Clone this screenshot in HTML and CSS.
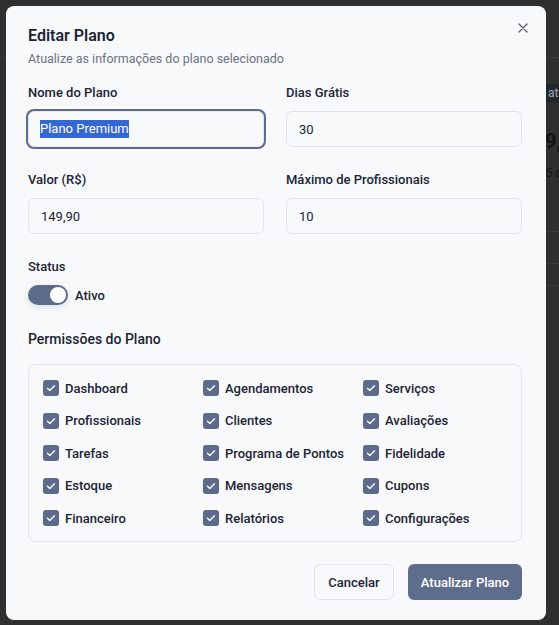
FILE: index.html
```html
<!DOCTYPE html>
<html lang="pt-BR">
<head>
<meta charset="utf-8">
<title>Editar Plano</title>
<link rel="stylesheet" href="styles.css">
</head>
<body>
<div class="page">
  <header class="page-header"></header>
  <section class="plan-card">
    <span class="badge">ativo</span>
    <div class="price">9,90</div>
    <div class="trial">5 dias</div>
    <div class="card-rule r1"></div>
    <div class="card-rule r2"></div>
    <div class="card-rule r3"></div>
  </section>
</div>

<div class="modal" role="dialog" aria-labelledby="dlg-title">
  <button class="close" aria-label="Fechar">
    <svg width="16" height="16" viewBox="0 0 16 16" fill="none" stroke="currentColor" stroke-width="1.3" stroke-linecap="round"><path d="M4 4l8 8M12 4l-8 8"/></svg>
  </button>
  <h2 id="dlg-title" class="title">Editar Plano</h2>
  <p class="subtitle">Atualize as informações do plano selecionado</p>

  <div class="grid">
    <div class="field">
      <label class="label">Nome do Plano</label>
      <div class="input focused"><span class="sel">Plano Premium</span></div>
    </div>
    <div class="field">
      <label class="label">Dias Grátis</label>
      <div class="input">30</div>
    </div>
    <div class="field">
      <label class="label">Valor (R$)</label>
      <div class="input">149,90</div>
    </div>
    <div class="field">
      <label class="label">Máximo de Profissionais</label>
      <div class="input">10</div>
    </div>
  </div>

  <div class="status">
    <label class="label">Status</label>
    <div class="switch-row">
      <span class="switch"><span class="thumb"></span></span>
      <span class="switch-text">Ativo</span>
    </div>
  </div>

  <h3 class="perm-title">Permissões do Plano</h3>
  <div class="perms">
    <div class="perm"><span class="cb"></span>Dashboard</div>
    <div class="perm"><span class="cb"></span>Agendamentos</div>
    <div class="perm"><span class="cb"></span>Serviços</div>
    <div class="perm"><span class="cb"></span>Profissionais</div>
    <div class="perm"><span class="cb"></span>Clientes</div>
    <div class="perm"><span class="cb"></span>Avaliações</div>
    <div class="perm"><span class="cb"></span>Tarefas</div>
    <div class="perm"><span class="cb"></span>Programa de Pontos</div>
    <div class="perm"><span class="cb"></span>Fidelidade</div>
    <div class="perm"><span class="cb"></span>Estoque</div>
    <div class="perm"><span class="cb"></span>Mensagens</div>
    <div class="perm"><span class="cb"></span>Cupons</div>
    <div class="perm"><span class="cb"></span>Financeiro</div>
    <div class="perm"><span class="cb"></span>Relatórios</div>
    <div class="perm"><span class="cb"></span>Configurações</div>
  </div>

  <div class="actions">
    <button class="btn btn-outline">Cancelar</button>
    <button class="btn btn-primary">Atualizar Plano</button>
  </div>
</div>
</body>
</html>
```
FILE: styles.css
```css
* { box-sizing: border-box; }
html, body { margin: 0; padding: 0; }
body {
  width: 559px;
  height: 625px;
  overflow: hidden;
  background: #2f2f2f;
  font-family: Roboto, "Noto Sans", sans-serif;
  color: #1c2434;
  position: relative;
}

/* background page (seen through overlay) */
.page { width: 559px; height: 625px; overflow: hidden; }
.page-header { height: 58px; border-bottom: 1px solid #3a3a3a; }
.plan-card { padding: 24px 0 0 545px; white-space: nowrap; }
.badge {
  display: inline-block;
  background: #22262d;
  color: #a3a7ad;
  font-size: 12px;
  line-height: 19px;
  padding: 0 3px;
}
.price { margin-top: 25px; font-size: 20px; font-weight: 700; color: #141414; line-height: 26px; }
.trial { margin-top: 10px; font-size: 13px; color: #161616; line-height: 18px; }
.card-rule { margin-left: -10px; height: 1px; background: #3a3a3a; }
.r1 { margin-top: 49px; }
.r2 { margin-top: 31px; }
.r3 { margin-top: 21px; }

/* modal */
.modal {
  position: absolute;
  left: 6px;
  top: 6px;
  width: 540px;
  height: 614px;
  background: #f8f9fb;
  border-radius: 8px;
  padding: 18px 24px 21px 22px;
}
.close {
  position: absolute;
  right: 15px;
  top: 14px;
  width: 16px;
  height: 16px;
  padding: 0;
  border: 0;
  background: none;
  color: #5b6170;
  display: flex;
}
.title {
  margin: 0;
  font-size: 16px;
  line-height: 24px;
  font-weight: 600;
  color: #1c2434;
}
.subtitle {
  margin: 2px 0 0;
  font-size: 12.5px;
  line-height: 18px;
  color: #6b7280;
}
.grid {
  margin-top: 15px;
  display: grid;
  grid-template-columns: minmax(0, 1fr) minmax(0, 1fr);
  column-gap: 22px;
  row-gap: 23px;
}
.field { display: flex; flex-direction: column; }
.label {
  display: block;
  font-size: 13px;
  line-height: 20px;
  font-weight: 500;
  color: #1c2434;
  margin-bottom: 8px;
}
.input {
  height: 36px;
  border: 1px solid #dfe5ee;
  border-radius: 6px;
  background: #f8f9fb;
  padding: 0 12px;
  display: flex;
  align-items: center;
  font-size: 13px;
  color: #1c2434;
}
.input.focused {
  border-color: #e3e8f0;
  box-shadow: 0 0 0 2px #5f6d8d;
  border-radius: 6px;
  padding-left: 11px;
}
.sel {
  background: #3467d3;
  color: #fff;
  line-height: 18px;
}
.status { margin-top: 23px; }
.switch-row { display: flex; align-items: center; gap: 7px; }
.switch {
  width: 40px;
  height: 20px;
  border-radius: 10px;
  background: #5c6b8a;
  position: relative;
  box-shadow: 0 2px 6px rgba(30, 40, 60, 0.12);
}
.thumb {
  position: absolute;
  right: 2px;
  top: 2px;
  width: 16px;
  height: 16px;
  border-radius: 50%;
  background: #fff;
}
.switch-text { font-size: 13px; font-weight: 500; color: #1c2434; }
.perm-title {
  margin: 24px 0 0;
  font-size: 14px;
  line-height: 20px;
  font-weight: 500;
  color: #1c2434;
}
.perms {
  margin-top: 15px;
  border: 1px solid #e2e7ef;
  border-radius: 8px;
  padding: 13px 14px;
  display: grid;
  grid-template-columns: repeat(3, minmax(0, 1fr));
  column-gap: 16px;
  row-gap: 12.5px;
}
.perm {
  display: flex;
  align-items: center;
  gap: 6px;
  height: 20px;
  font-size: 13px;
  font-weight: 500;
  color: #1c2434;
  white-space: nowrap;
}
.cb {
  flex: none;
  width: 16px;
  height: 16px;
  border-radius: 3px;
  background: #5c6b8a url("data:image/svg+xml,%3Csvg xmlns='http://www.w3.org/2000/svg' viewBox='0 0 16 16'%3E%3Cpath d='M4.5 8.3l2.3 2.2 4.7-4.8' fill='none' stroke='white' stroke-width='1.3' stroke-linecap='round' stroke-linejoin='round'/%3E%3C/svg%3E") center / 16px 16px no-repeat;
}
.actions {
  margin-top: 22px;
  display: flex;
  justify-content: flex-end;
  gap: 14px;
}
.btn {
  height: 36px;
  border-radius: 6px;
  font-family: inherit;
  font-size: 13px;
  font-weight: 500;
  padding: 0;
  white-space: nowrap;
}
.btn-outline {
  background: #f8f9fb;
  border: 1px solid #dfe5ee;
  color: #1c2434;
  width: 80px;
}
.btn-primary {
  background: #5f6d8d;
  border: 0;
  color: #fff;
  width: 114px;
}
```
